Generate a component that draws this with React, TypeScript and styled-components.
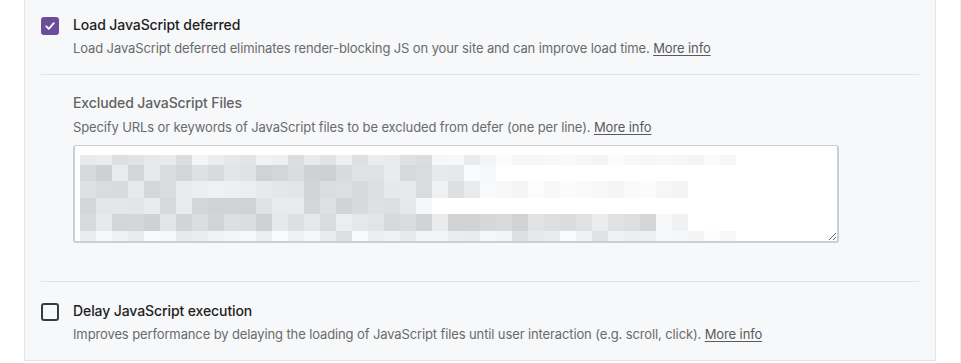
import React from 'react'
import styled, { createGlobalStyle } from 'styled-components'

const GlobalStyle = createGlobalStyle`
  html, body {
    margin: 0;
    padding: 0;
    background: #ffffff;
  }
  body {
    font-family: Inter, "Noto Sans", "Liberation Sans", sans-serif;
    -webkit-font-smoothing: antialiased;
  }
`

const Page = styled.div`
  box-sizing: border-box;
  width: 100%;
  min-height: 363px;
  padding: 0 24px;
  border-right: 1px solid #eceef1;
`

const Panel = styled.section`
  background: #f7f8fa;
  border: 1px solid #e3e5e8;
  border-top: none;
  padding: 15px 16px 16px;
`

const OptionRow = styled.div<{ $top?: number }>`
  display: flex;
  align-items: flex-start;
  gap: 14px;
  padding-top: ${p => p.$top ?? 0}px;
`

const Box = styled.span<{ $checked?: boolean }>`
  box-sizing: border-box;
  flex: none;
  width: 18px;
  height: 18px;
  margin-top: 2px;
  border-radius: 3px;
  display: flex;
  align-items: center;
  justify-content: center;
  background: ${p => (p.$checked ? '#6b4e9b' : 'transparent')};
  border: ${p => (p.$checked ? 'none' : '2px solid #3a3a3a')};
`

const OptionText = styled.div`
  display: flex;
  flex-direction: column;
`

const Title = styled.div`
  font-size: 14px;
  line-height: 20px;
  font-weight: 500;
  letter-spacing: -0.1px;
  color: #1e1e1e;
`

const Desc = styled.div<{ $gap?: number }>`
  margin-top: ${p => p.$gap ?? 3}px;
  font-size: 13px;
  line-height: 20px;
  letter-spacing: -0.12px;
  color: #6a6a6a;
`

const More = styled.a`
  color: #5a5a5a;
  text-decoration: underline;
  text-underline-offset: 2px;
`

const Divider = styled.hr<{ $top: number }>`
  border: none;
  height: 1px;
  background: #e1e3e6;
  margin: ${p => p.$top}px 0 0;
`

const SubField = styled.div`
  padding: 18px 0 0 32px;
`

const SubTitle = styled.div`
  font-size: 14px;
  line-height: 20px;
  font-weight: 500;
  letter-spacing: -0.1px;
  color: #626262;
`

const AreaWrap = styled.div`
  position: relative;
  width: 766px;
  height: 98px;
  margin-top: 8px;
`

const Area = styled.textarea`
  box-sizing: border-box;
  display: block;
  width: 100%;
  height: 100%;
  margin: 0;
  background: #ffffff;
  border: 2px solid #c9cfd7;
  border-top-width: 1.5px;
  border-radius: 3px;
  resize: vertical;
  outline: none;
`

const Mosaic = styled.svg`
  position: absolute;
  left: 7px;
  top: 10px;
  pointer-events: none;
`

// the blurred list of excluded files, as a pixel mosaic
const rows = [
  { h: 10, dense: 26, faint: 41, base: 218 },
  { h: 16, dense: 24, faint: 26, base: 205 },
  { h: 17, dense: 25, faint: 38, base: 210 },
  { h: 16, dense: 21, faint: 22, base: 208 },
  { h: 17, dense: 38, faint: 38, base: 208 },
  { h: 10, dense: 36, faint: 41, base: 220 },
]

function seeded(seed: number) {
  let s = seed
  return () => {
    s = (s * 9301 + 49297) % 233280
    return s / 233280
  }
}

const MosaicBlocks: React.FC = () => {
  const rnd = seeded(7)
  let y = 0
  const rects: React.ReactNode[] = []
  rows.forEach((r, ri) => {
    for (let c = 0; c < r.faint; c++) {
      const dense = c < r.dense
      const v = dense
        ? Math.round(r.base + rnd() * 30 + (c > r.dense - 3 ? 12 : 0))
        : Math.round(243 + rnd() * 8)
      const shade = Math.min(v, 252)
      rects.push(
        <rect
          key={`${ri}-${c}`}
          x={c * 16}
          y={y}
          width={16}
          height={r.h}
          fill={`rgb(${shade},${shade + 1},${Math.min(shade + 3, 255)})`}
        />
      )
    }
    y += r.h
  })
  return (
    <Mosaic width={656} height={86} viewBox="0 0 656 86">
      {rects}
    </Mosaic>
  )
}

const Check: React.FC<{ checked?: boolean }> = ({ checked }) => (
  <Box $checked={checked}>
    {checked && (
      <svg width="12" height="12" viewBox="0 0 12 12">
        <polyline
          points="2.3,6.4 4.8,8.9 9.8,3.2"
          fill="none"
          stroke="#ffffff"
          strokeWidth="1.8"
          strokeLinecap="round"
          strokeLinejoin="round"
        />
      </svg>
    )}
  </Box>
)

const App: React.FC = () => {
  return (
    <>
      <GlobalStyle />
      <Page>
        <Panel>
          <OptionRow>
            <Check checked />
            <OptionText>
              <Title>Load JavaScript deferred</Title>
              <Desc>
                Load JavaScript deferred eliminates render-blocking JS on your site and can improve load time.{' '}
                <More href="#">More info</More>
              </Desc>
            </OptionText>
          </OptionRow>
          <Divider $top={16} />
          <SubField>
            <SubTitle>Excluded JavaScript Files</SubTitle>
            <Desc $gap={4}>
              Specify URLs or keywords of JavaScript files to be excluded from defer (one per line).{' '}
              <More href="#">More info</More>
            </Desc>
            <AreaWrap>
              <Area aria-label="Excluded JavaScript Files" />
              <MosaicBlocks />
            </AreaWrap>
          </SubField>
          <Divider $top={38} />
          <OptionRow $top={19}>
            <Check />
            <OptionText>
              <Title>Delay JavaScript execution</Title>
              <Desc>
                Improves performance by delaying the loading of JavaScript files until user interaction (e.g. scroll, click).{' '}
                <More href="#">More info</More>
              </Desc>
            </OptionText>
          </OptionRow>
        </Panel>
      </Page>
    </>
  )
}

export default App
